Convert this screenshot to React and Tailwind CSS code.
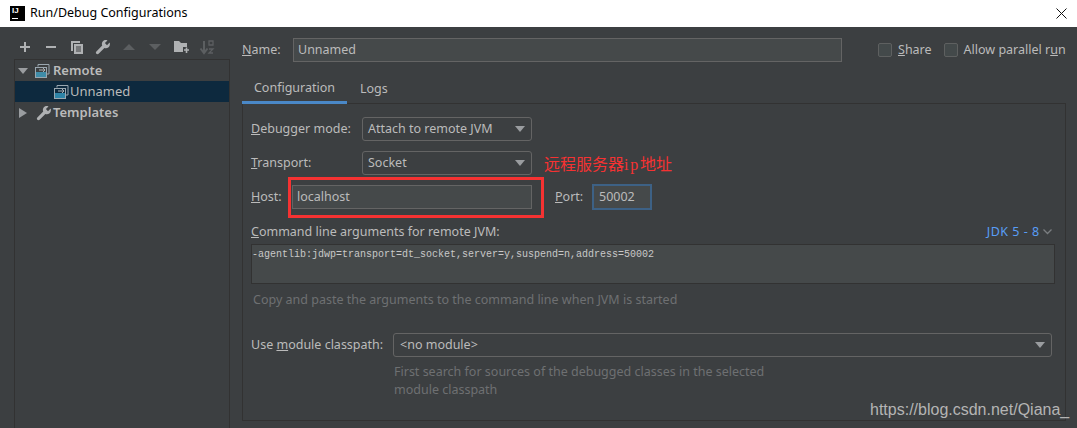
import React from 'react';

const Wrench = ({ size = 16, color = '#afb1b3' }) => (
    <svg width={size} height={size} viewBox="0 0 16 16" fill={color}>
        <path d="M14.6 3.6 12 6.2 9.9 4.1 12.5 1.5C10.6.7 8.5 1.2 7.5 2.8 6.7 4 6.7 5.4 7.2 6.6L1.4 12.4C.7 13.100.7 14.100 1.4 14.700 2 15.300 3 15.300 3.600 14.700L9.400 8.900C10.600 9.400 12.100 9.300 13.300 8.500 14.800 7.400 15.400 5.400 14.600 3.600Z" />
    </svg>
);

const RemoteIcon = () => (
    <svg width="16" height="16" viewBox="0 0 16 16" fill="none">
        <path d="M4 3.500V1.500H15V11H12.500" stroke="#9aa7b0" />
        <rect x="1.500" y="4.500" width="11" height="10" stroke="#9aa7b0" />
        <rect x="2" y="9" width="10" height="5" fill="#40b6e0" fillOpacity="0.65" />
        <path d="M5 7H11M9 5L11 7 9 9" stroke="#afb1b3" />
    </svg>
);

const Caret = ({ className = '' }) => (
    <svg width="10" height="6" viewBox="0 0 10 6" className={className}>
        <path d="M0 0H10L5 6Z" fill="#9a9da0" />
    </svg>
);

const Toolbar = () => (
    <div className="h-[32px] flex items-start pl-[3px] pt-[12px]">
        <svg width="16" height="16" viewBox="0 0 16 16" className="mr-[10px]"><path d="M3 8H13M8 3V13" stroke="#afb1b3" strokeWidth="2" /></svg>
        <svg width="16" height="16" viewBox="0 0 16 16" className="mr-[10px]"><path d="M3 8H13" stroke="#afb1b3" strokeWidth="2" /></svg>
        <svg width="16" height="16" viewBox="0 0 16 16" className="mr-[10px]">
            <path d="M2 2H11V4H4V12H2Z" fill="#afb1b3" />
            <path d="M5 5H14V15H5Z" fill="#afb1b3" />
            <path d="M7 8H12M7 10H12M7 12H12" stroke="#3c3f41" />
        </svg>
        <div className="mr-[10px]"><Wrench /></div>
        <svg width="16" height="16" viewBox="0 0 16 16" className="mr-[10px]"><path d="M2 11L8 5 14 11Z" fill="#5c5f61" /></svg>
        <svg width="16" height="16" viewBox="0 0 16 16" className="mr-[10px]"><path d="M2 5L8 11 14 5Z" fill="#5c5f61" /></svg>
        <svg width="16" height="16" viewBox="0 0 16 16" className="mr-[10px]">
            <path d="M1 2H6L8 4H14V8H10V13H1Z" fill="#afb1b3" />
            <path d="M11 11H16M13.500 8.500V14" stroke="#afb1b3" strokeWidth="1.600" />
        </svg>
        <svg width="16" height="18" viewBox="0 0 16 18" className="-mt-[1px]">
            <path d="M5 3V14M1.500 10.500L5 15 8.500 10.500" stroke="#5c5f61" strokeWidth="2" fill="none" />
            <path d="M10 3H14V7H10ZM10 11H14L10 15H14" stroke="#5c5f61" strokeWidth="1.300" fill="none" />
        </svg>
    </div>
);

const Sidebar = () => (
    <div className="w-[242px] shrink-0 pl-[14px] pr-[12px] flex flex-col">
        <Toolbar />
        <div className="flex-1 border-x border-t border-[#323232] text-[#bbbbbb] text-[13px] font-semibold">
            <div className="h-[21px] flex items-center pl-[3px]">
                <Caret className="w-[10px] mr-[6px]" />
                <RemoteIcon />
                <span className="ml-[3px]">Remote</span>
            </div>
            <div className="h-[21px] flex items-center pl-[38px] bg-[#0d293e] font-normal">
                <RemoteIcon />
                <span className="ml-[1px]">Unnamed</span>
            </div>
            <div className="h-[21px] flex items-center pl-[4px]">
                <svg width="8" height="10" viewBox="0 0 8 10" className="mr-[9px]"><path d="M0 0L8 5 0 10Z" fill="#9a9da0" /></svg>
                <Wrench />
                <span className="ml-[1px]">Templates</span>
            </div>
        </div>
    </div>
);

const Select = ({ value, className = '' }) => (
    <div className={`h-[24px] flex items-center justify-between border border-[#646464] rounded-[3px] pl-[5px] pr-[6px] ${className}`}>
        <span className="pt-[1px]">{value}</span>
        <Caret />
    </div>
);

const Check = ({ label, className = '' }) => (
    <div className={`flex items-center ${className}`}>
        <span className="w-[14px] h-[14px] border border-[#5e6060] rounded-[2px] bg-[#43494a] mr-[6px]" />
        {label}
    </div>
);

const Configuration = () => (
    <div className="flex-1 border-x border-b border-[#323232] pl-[8px] pr-[9px] pt-[13px]">
        <div className="flex items-center h-[24px]">
            <span className="w-[111px]"><u>D</u>ebugger mode:</span>
            <Select value="Attach to remote JVM" className="w-[170px]" />
        </div>
        <div className="flex items-center h-[24px] mt-[10px]">
            <span className="w-[111px]"><u>T</u>ransport:</span>
            <Select value="Socket" className="w-[170px]" />
        </div>
        <div className="flex items-center h-[26px] mt-[9px]">
            <span className="w-[41px]"><u>H</u>ost:</span>
            <div className="w-[240px] h-[24px] flex items-center pl-[4px] border border-[#646464] bg-[#45494a]">localhost</div>
            <span className="ml-[23px] w-[37px]"><u>P</u>ort:</span>
            <div className="w-[60px] h-[26px] flex items-center pl-[5px] border-2 border-[#3d6185] bg-[#45494a]">50002</div>
        </div>
        <div className="flex items-center justify-between mt-[12px] h-[20px] mr-[3px]">
            <span><u>C</u>ommand line arguments for remote JVM:</span>
            <span className="flex items-center text-[#589df6] tracking-[0.5px] mr-[1px]">
                JDK 5 - 8
                <svg width="9" height="6" viewBox="0 0 9 6" className="ml-[3px]"><path d="M.5.5L4.500 4.500 8.500.5" stroke="#7a7d80" strokeWidth="1.300" fill="none" /></svg>
            </span>
        </div>
        <div className="h-[40px] mt-[2px] w-[804px] border border-[#323232] bg-[#45494a] py-[3px] font-['Liberation_Mono',monospace] text-[10px] leading-[14px] text-[#c8c8c8]">
            -agentlib:jdwp=transport=dt_socket,server=y,suspend=n,address=50002
        </div>
        <div className="mt-[7px] ml-[2px] text-[#6e7072] h-[20px]">Copy and paste the arguments to the command line when JVM is started</div>
        <div className="flex items-center h-[24px] mt-[22px]">
            <span className="w-[142px]">Use <u>m</u>odule classpath:</span>
            <Select value="<no module>" className="w-[659px] pl-[6px]" />
        </div>
        <div className="mt-[6px] ml-[143px] text-[#6e7072] leading-[18px]">
            First search for sources of the debugged classes in the selected<br />module classpath
        </div>
    </div>
);

export default function App() {
    return (
        <div className="relative w-[1077px] h-[428px] overflow-hidden flex flex-col bg-[#3c3f41] font-['Noto_Sans',sans-serif] text-[12.5px] text-[#bbbbbb]">
            {/* Title bar */}
            <div className="h-[27px] shrink-0 bg-white flex items-center pl-[10px] pr-[10px] pb-[1px] text-black">
                <div className="relative w-[15px] h-[15px] bg-black mr-[5px]">
                    <span className="absolute left-[2px] top-[0px] font-['Liberation_Sans',sans-serif] font-bold text-[8px] leading-[10px] text-white">IJ</span>
                    <span className="absolute left-[2px] bottom-[2px] w-[6px] h-[1px] bg-white" />
                </div>
                <span className="flex-1">Run/Debug Configurations</span>
                <svg width="11" height="11" viewBox="0 0 11 11"><path d="M.5.5L10.500 10.500M10.500.5L.5 10.500" stroke="#111" /></svg>
            </div>
            <div className="flex-1 flex min-h-0">
                <Sidebar />
                <div className="flex-1 flex flex-col pr-[12px] pb-[7px]">
                    <div className="flex items-center h-[24px] mt-[11px]">
                        <span className="w-[51px]"><u>N</u>ame:</span>
                        <div className="w-[549px] h-[24px] flex items-center pl-[4px] border border-[#646464] bg-[#45494a]">Unnamed</div>
                        <Check label={<span><u>S</u>hare</span>} className="ml-[36px]" />
                        <Check label={<span>Allow parallel r<u>u</u>n</span>} className="ml-[12px] whitespace-nowrap" />
                    </div>
                    <div className="flex h-[31px] mt-[11px] border-b border-[#323232]">
                        <div className="w-[105px] -mb-[1px] flex items-center justify-center pt-[2px] border-b-[3px] border-[#4a88c7]">Configuration</div>
                        <div className="ml-[13px] flex items-center pt-[2px]">Logs</div>
                    </div>
                    <Configuration />
                </div>
            </div>
            {/* Screenshot annotations */}
            <div className="absolute left-[288px] top-[177px] w-[256px] h-[41px] border-[3px] border-[#f53232]" />
            <span className="absolute left-[544px] top-[153px] text-[16px] leading-[20px] text-[#f53232] font-['Noto_Sans_CJK_SC',sans-serif]">
                远程服务器<span className="font-['Liberation_Serif',serif] tracking-[1.800px]">ip</span>地址
            </span>
            <span className="absolute left-[870px] top-[400px] text-[16px] leading-[20px] text-[#b4b4b4] font-['Liberation_Sans',sans-serif]">https://blog.csdn.net/Qiana_</span>
        </div>
    );
}
